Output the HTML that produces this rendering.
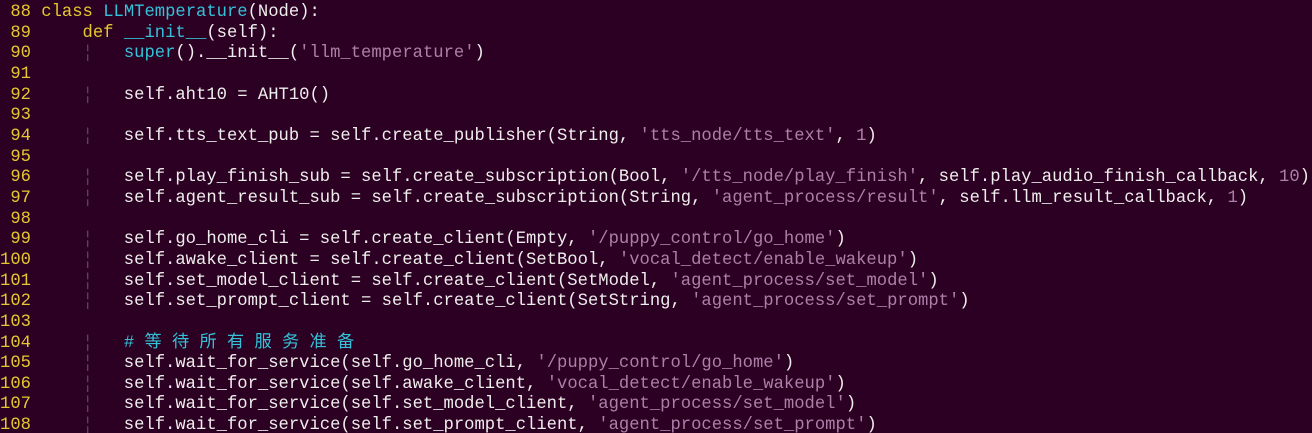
<!DOCTYPE html>
<html><head><meta charset="utf-8"><style>
html,body{margin:0;padding:0;background:#2c0022;width:1312px;height:433px;overflow:hidden}
pre{margin:0;padding:3px 0 0 0;font-family:"Liberation Mono","Noto Sans CJK SC",monospace;font-size:17.2px;line-height:20.65px;color:#eeeeec;white-space:pre}
.n{color:#e5c82f}.k{color:#e5c82f}.c{color:#34c2d8}.s{color:#ad7fa8}.g{color:#5a4452}
</style></head><body><pre><span class="n"> 88</span> <span class="k">class</span> <span class="c">LLMTemperature</span>(Node):
<span class="n"> 89</span>     <span class="k">def</span> <span class="c">__init__</span>(self):
<span class="n"> 90</span>     <span class="g">¦</span>   <span class="c">super</span>().__init__(<span class="s">'llm_temperature'</span>)
<span class="n"> 91</span>
<span class="n"> 92</span>     <span class="g">¦</span>   self.aht10 = AHT10()
<span class="n"> 93</span>
<span class="n"> 94</span>     <span class="g">¦</span>   self.tts_text_pub = self.create_publisher(String, <span class="s">'tts_node/tts_text'</span>, <span class="s">1</span>)
<span class="n"> 95</span>
<span class="n"> 96</span>     <span class="g">¦</span>   self.play_finish_sub = self.create_subscription(Bool, <span class="s">'/tts_node/play_finish'</span>, self.play_audio_finish_callback, <span class="s">10</span>)
<span class="n"> 97</span>     <span class="g">¦</span>   self.agent_result_sub = self.create_subscription(String, <span class="s">'agent_process/result'</span>, self.llm_result_callback, <span class="s">1</span>)
<span class="n"> 98</span>
<span class="n"> 99</span>     <span class="g">¦</span>   self.go_home_cli = self.create_client(Empty, <span class="s">'/puppy_control/go_home'</span>)
<span class="n">100</span>     <span class="g">¦</span>   self.awake_client = self.create_client(SetBool, <span class="s">'vocal_detect/enable_wakeup'</span>)
<span class="n">101</span>     <span class="g">¦</span>   self.set_model_client = self.create_client(SetModel, <span class="s">'agent_process/set_model'</span>)
<span class="n">102</span>     <span class="g">¦</span>   self.set_prompt_client = self.create_client(SetString, <span class="s">'agent_process/set_prompt'</span>)
<span class="n">103</span>
<span class="n">104</span>     <span class="g">¦</span>   <span class="c"># 等 待 所 有 服 务 准 备</span>
<span class="n">105</span>     <span class="g">¦</span>   self.wait_for_service(self.go_home_cli, <span class="s">'/puppy_control/go_home'</span>)
<span class="n">106</span>     <span class="g">¦</span>   self.wait_for_service(self.awake_client, <span class="s">'vocal_detect/enable_wakeup'</span>)
<span class="n">107</span>     <span class="g">¦</span>   self.wait_for_service(self.set_model_client, <span class="s">'agent_process/set_model'</span>)
<span class="n">108</span>     <span class="g">¦</span>   self.wait_for_service(self.set_prompt_client, <span class="s">'agent_process/set_prompt'</span>)
</pre></body></html>
